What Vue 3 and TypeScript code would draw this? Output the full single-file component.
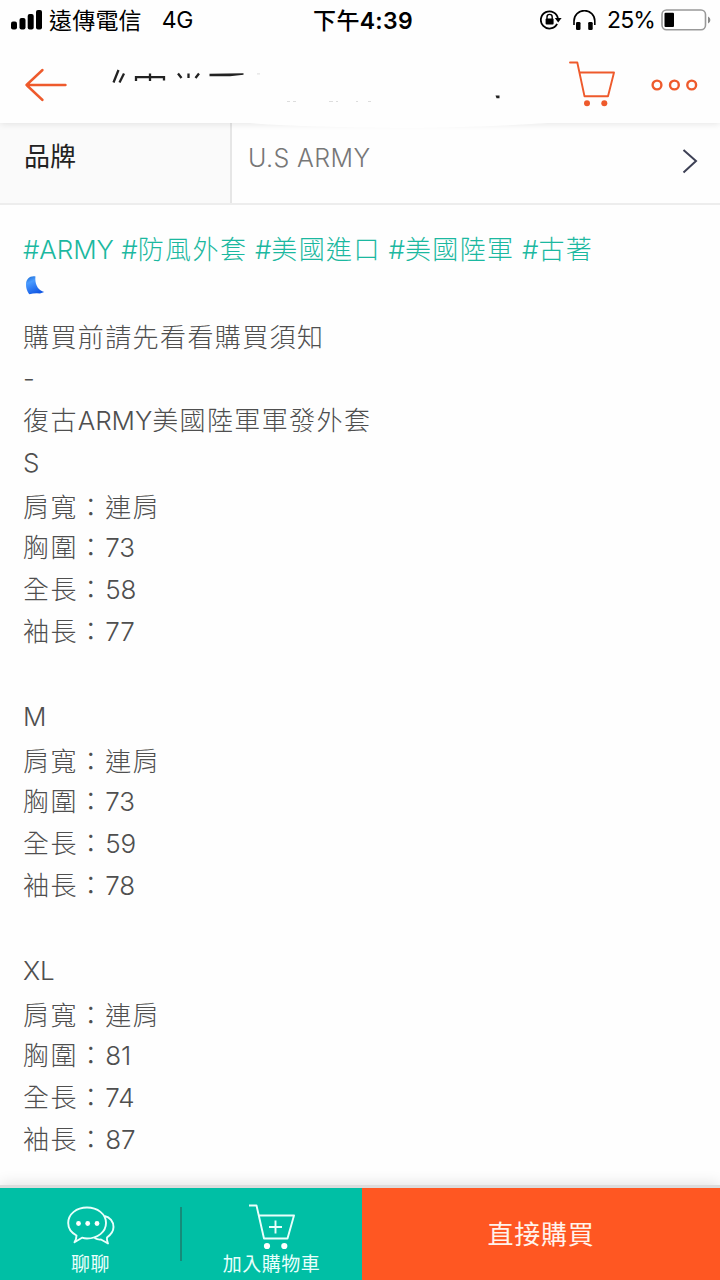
<script setup lang="ts">
interface SizeGroup { name: string; shoulder: string; chest: number; length: number; sleeve: number }

const tags: string[][] = [
  ['#ARMY ', ''], ['#', '防風外套'], [' #', '美國進口'], [' #', '美國陸軍'], [' #', '古著'],
]
const sizes: SizeGroup[] = [
  { name: 'S', shoulder: '連肩', chest: 73, length: 58, sleeve: 77 },
  { name: 'M', shoulder: '連肩', chest: 73, length: 59, sleeve: 78 },
  { name: 'XL', shoulder: '連肩', chest: 81, length: 74, sleeve: 87 },
]
</script>

<template>
  <div class="screen">
    <header class="top">
      <div class="status">
        <div class="left">
          <svg class="signal" width="32" height="20" viewBox="0 0 32 20">
            <rect x="0" y="11.5" width="6" height="8" rx="2" /><rect x="8.5" y="8" width="6" height="11.500" rx="2" />
            <rect x="16.700" y="4" width="6" height="15.500" rx="2" /><rect x="25" y="0" width="6" height="19.500" rx="2" />
          </svg>
          <span class="carrier">遠傳電信</span><span class="net">4G</span>
        </div>
        <div class="time"><span class="noon">下午</span>4:39</div>
        <div class="right">
          <svg width="22" height="20" viewBox="0 0 22 20">
            <path d="M17.100 13.900A8.600 8.600 0 1 1 18 9" fill="none" stroke="#000" stroke-width="1.800" />
            <path d="M14.800 8h6.800l-3.400 4.500z" />
            <rect x="5.600" y="8.400" width="8" height="6" rx="1" />
            <path d="M7 9V7a2.600 2.600 0 0 1 5.200 0v2" fill="none" stroke="#000" stroke-width="1.400" />
          </svg>
          <svg class="phones" width="23" height="20" viewBox="0 0 23 20">
            <path d="M1 15V11a10.300 10.300 0 0 1 20.800 0v4" fill="none" stroke="#000" stroke-width="1.600" />
            <rect x="3" y="12" width="4.500" height="8" rx="1.300" /><rect x="15.200" y="12" width="4.500" height="8" rx="1.300" />
          </svg>
          <span class="pct">25%</span>
          <svg class="battery" width="50" height="22" viewBox="0 0 50 22">
            <rect x="1" y="1" width="43.500" height="19.800" rx="4.500" fill="#fff" stroke="#999" stroke-width="1.600" />
            <rect x="3.500" y="3.700" width="9.500" height="14.300" rx="1" /><path d="M47 7.500q2.400 1 2.400 3.500t-2.400 3.500z" fill="#888" />
          </svg>
        </div>
      </div>
      <div class="nav">
        <svg class="back" width="44" height="34" viewBox="0 0 44 34">
          <path d="M18.500 2L2.500 17L18.500 32M2.500 17H41.500" />
        </svg>
        <svg class="title" width="430" height="40" viewBox="0 0 430 40">
          <g fill="none" stroke="#222" stroke-width="2.300">
            <path d="M9.500 5L4.500 17.500M15 8.500L10.500 17.500M27 16V12.200H55V15.500M41 8.500V16M69 8.500L72.500 13M79.500 8.500V13M90 8.500L86.500 13" />
          </g>
          <path d="M100.500 8.800L134.500 8.300V9.800L121 11.300H100.500z" fill="#222" />
          <path d="M148 8.900h3M178 36.500h3m3 0h3M220 36.500h4m3 0h2M247 36.500h2m10 0h3" stroke="#ddd" />
          <path d="M386.500 30.500h4v2.800h-3z" fill="#222" />
        </svg>
        <svg class="cart" width="48" height="46" viewBox="0 0 48 46">
          <path d="M1 1.500H8.300L15.500 35.200H39L45 11.500H10.500" /><circle cx="18" cy="42.300" r="3" /><circle cx="35.300" cy="42.300" r="3" />
        </svg>
        <svg class="more" width="47" height="12" viewBox="0 0 47 12">
          <circle cx="6" cy="6" r="4.400" /><circle cx="23.400" cy="6" r="4.400" /><circle cx="40.700" cy="6" r="4.400" />
        </svg>
      </div>
      <svg class="bulge" width="340" height="9" viewBox="0 0 340 9"><path d="M0 0Q60 5 170 6Q265 5 325 0z" fill="#fefefe" /></svg>
    </header>

    <section class="brand">
      <div class="label">品牌</div>
      <div class="value"><span>U.S ARMY</span>
        <svg width="16" height="26" viewBox="0 0 16 26"><path d="M1.500 2L14 13L1.500 24.500" /></svg>
      </div>
    </section>

    <main class="desc">
      <div class="tags"><template v-for="(t, i) in tags" :key="i">{{ t[0] }}<span class="cjk">{{ t[1] }}</span></template></div>
      <div class="emoji">
        <svg width="20" height="19" viewBox="0 0 20 19">
          <defs><linearGradient id="wave" x1="0" y1="0" x2="0.5" y2="1"><stop offset="0" stop-color="#1767cf" /><stop offset="0.350" stop-color="#4b9cff" /><stop offset="1" stop-color="#1258e4" /></linearGradient></defs>
          <path d="M10.500 0.500C5-0.500 1 3 1 8.500C1 13 3 17 4.500 18.300Q9 17 15 17.500L19.200 16C13 14.500 9.500 8 10.500 0.500z" fill="url(#wave)" />
        </svg>
      </div>
      <div class="line notice"><span class="cjk">購買前請先看看購買須知</span></div>
      <div class="line dash">-</div>
      <div class="line"><span class="cjk">復古</span>ARMY<span class="cjk">美國陸軍軍發外套</span></div>
      <div v-for="s in sizes" :key="s.name" class="group">
        <div class="line">{{ s.name }}</div>
        <div class="line shoulder"><span class="cjk">肩寬：{{ s.shoulder }}</span></div>
        <div class="line"><span class="cjk">胸圍：</span>{{ s.chest }}</div>
        <div class="line"><span class="cjk">全長：</span>{{ s.length }}</div>
        <div class="line"><span class="cjk">袖長：</span>{{ s.sleeve }}</div>
      </div>
    </main>

    <footer class="bar">
      <div class="action chat">
        <svg width="48" height="40" viewBox="0 0 48 40">
          <path d="M9.500 29.500C4 26.500 1.200 21.500 1.200 17C1.200 8 9.500 1.500 20 1.500S39 8 39 17S30.500 32.500 20 32.500C18 32.500 16.500 32.200 15 31.700L7.500 36.200Q9.500 33 9.500 29.500z" />
          <path d="M37.500 10C43 11 46.500 15.500 46.500 21C46.500 25 44 28.500 40 31.500Q39.500 34 41 37.500L34 33.500Q31 34 27.500 32" />
          <g class="fill"><circle cx="11.500" cy="17.500" r="2.400" /><circle cx="20.700" cy="17.500" r="2.400" /><circle cx="30" cy="17.500" r="2.400" /></g>
        </svg>
        <span>聊聊</span>
      </div>
      <div class="action add">
        <svg width="48" height="46" viewBox="0 0 48 46">
          <path d="M1 1.500H8.500L16 34.500H39.500L46 11.500H11M27.500 16.500V29.500M21 23H34" />
          <g class="fill"><circle cx="19" cy="42" r="3.100" /><circle cx="36.300" cy="42" r="3.100" /></g>
        </svg>
        <span>加入購物車</span>
      </div>
      <div class="buy">直接購買</div>
    </footer>
  </div>
</template>

<style>
html, body { margin: 0; background: #fefefe; }
</style>

<style scoped>
.screen { width: 720px; height: 1280px; display: flex; flex-direction: column; overflow: hidden; background: #fefefe; font-family: Inter, "Noto Sans CJK TC", sans-serif; color: #4f4f4f; }
.screen * { box-sizing: border-box; }
svg { display: block; flex: none; }
.top { height: 123px; flex: none; position: relative; z-index: 1; background: #fefefe; box-shadow: 0 1px 7px rgba(0,0,0,.1); }
.bulge { position: absolute; left: 235px; top: 122px; }
.status { height: 40px; display: grid; grid-template-columns: 1fr auto 1fr; align-items: center; color: #000; padding: 0 9px 0 11px; font-size: 23px; }
.left, .right { display: flex; align-items: center; }
.left { white-space: nowrap; }
.carrier { margin-left: 6px; margin-top: -2px; font-size: 23px; letter-spacing: .2px; }
.net { margin-left: 20px; letter-spacing: -.3px; }
.time { font-weight: 600; letter-spacing: .3px; font-size: 23px; white-space: nowrap; padding-left: 4px; margin-top: -3px; }
.noon { font-weight: 500; }
.right { justify-content: flex-end; }
.phones { margin-left: 11px; }
.pct { margin-left: 11px; letter-spacing: -.9px; }
.battery { margin-left: 6px; }
.nav { height: 83px; display: flex; align-items: flex-start; padding: 22px 22px 0 24px; }
.back { margin-top: 6px; }
.back path, .cart path, .more circle { fill: none; stroke: #ee5a2c; stroke-width: 2.400; stroke-linecap: round; stroke-linejoin: round; }
.cart path { stroke-width: 1.900; }
.cart circle { fill: #ee5a2c; }
.title { margin-left: 41px; margin-top: 3px; }
.cart { margin-left: 30px; margin-top: -1px; }
.more { margin-left: 34px; margin-top: 17px; }
.brand { height: 82px; flex: none; display: flex; border-bottom: 2px solid #ededed; }
.label { width: 232px; border-right: 2px solid #e6e6e6; background: #fafafa; padding-left: 24px; line-height: 68px; font-size: 26px; color: #222; }
.value { flex: 1; display: flex; justify-content: space-between; padding: 0 22px 0 16px; font-size: 25px; letter-spacing: .4px; line-height: 70px; font-weight: 300; color: #777; }
.value svg { margin-top: 25px; }
.value path { fill: none; stroke: #3d4055; stroke-width: 2; }
.desc { flex: 1; min-height: 0; padding: 23px 23px 0; font-size: 26px; font-weight: 300; letter-spacing: -.1px; }
.tags { height: 42px; line-height: 43px; color: #1bb8a0; white-space: pre; }
.tags, .tags .cjk { word-spacing: .4px; }
.cjk { letter-spacing: 1.400px; }
.emoji { height: 46px; padding: 6px 0 0 2px; }
.line { height: 42px; line-height: 42px; white-space: nowrap; }
.group { margin-bottom: 43px; }
.group:last-child { margin-bottom: 0; }
.notice { padding-top: 1px; }
.shoulder { height: 43px; padding-top: 4px; line-height: 39px; }
.bar { height: 92px; flex: none; display: flex; background: #00bfa5; position: relative; box-shadow: 0 -3px 0 #dcdcdc, 0 -4px 14px rgba(0,0,0,.12); color: #fff; }
.action { width: 181px; display: flex; flex-direction: column; align-items: center; font-size: 19px; line-height: 28px; letter-spacing: .5px; color: #e9fffc; }
.action svg { fill: none; stroke: #e9fffc; stroke-width: 1.900; stroke-linejoin: round; }
.action .fill { fill: #fff; stroke: none; }
.chat { position: relative; }
.chat svg { margin-top: 18px; margin-bottom: 5px; }
.chat::after { content: ""; position: absolute; right: -1px; top: 19px; width: 2px; height: 54px; background: #168b7a; }
.add svg { margin-top: 16px; margin-bottom: 1px; }
.buy { flex: 1; background: #ff5722; text-align: center; line-height: 94px; font-size: 26px; letter-spacing: .8px; color: #fff3ec; }
</style>
